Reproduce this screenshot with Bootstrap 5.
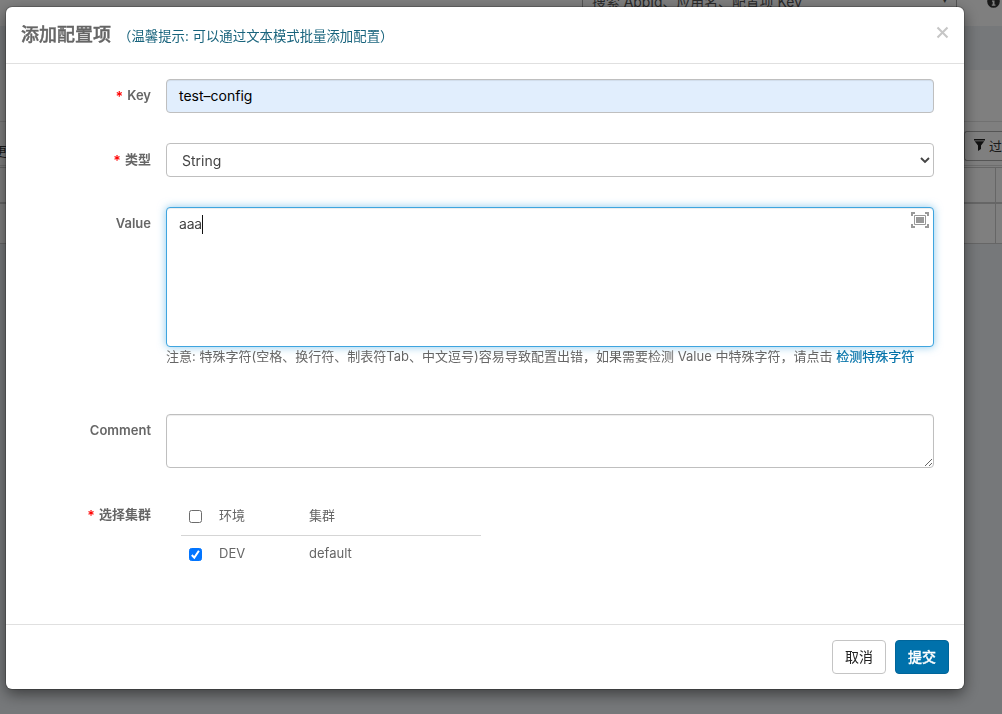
<!DOCTYPE html>
<html lang="zh-CN">
<head>
<meta charset="utf-8">
<meta name="viewport" content="width=device-width, initial-scale=1">
<title>添加配置项</title>
<link rel="stylesheet" href="https://cdn.jsdelivr.net/npm/bootstrap@5.3.0/dist/css/bootstrap.min.css">
<style>
html, body { height: 100%; }
body { font-family: Inter, "Noto Sans CJK SC", sans-serif; font-size: 13px; line-height: 20px; color: #666; background: #edf1f5; overflow: hidden; }
/* page behind the dialog */
.top-bar { height: 26px; background: #fff; padding-right: 2px; gap: 30px; }
.top-search { width: 375px; height: 27px; margin-top: -19px; border: 1px solid #aaa; padding: 0 9px; font-size: 13.9px; line-height: 41px; color: #555; }
.top-search span { font-size: 7px; line-height: 37px; }
.top-info { margin-top: -5px; }
.gap-band { height: 44px; }
.ns-head { height: 52px; border-bottom: 1px solid #e2e2e2; }
.ns-tools { height: 44px; padding-top: 9px; padding-right: 0; border-bottom: 1px solid #ddd; }
.filter-btn { width: 38px; height: 30px; border: 1px solid #aaa; border-right: 0; border-radius: 3px 0 0 3px; color: #333; padding-left: 10px; gap: 4px; white-space: nowrap; overflow: hidden; font-size: 13px; }
.filter-btn svg { margin-top: -2px; margin-left: -1px; }
.ns-left { color: #333; line-height: 40px; margin-left: -6px; }
.ns-grid-head { height: 37px; margin-top: 1px; border-top: 1px solid #ccc; border-bottom: 2px solid #ccc; }
.ns-grid-line { height: 40px; border-bottom: 1px solid #ccc; }
.ns-cell { width: 7px; border-left: 1px solid #ccc; }
/* dialog */
.modal-backdrop { --bs-backdrop-opacity: .5; }
.modal-dialog.cfg-dialog { width: 958px; max-width: none; margin: 7px 0 0 6px; }
.cfg-dialog .modal-content { height: 682px; border: 0; border-radius: 6px; box-shadow: 0 0 0 1px rgba(0,0,0,.2), 0 5px 15px rgba(0,0,0,.5); color: #666; }
.cfg-dialog .modal-header { height: 57px; padding: 0 15px; border-bottom: 1px solid #e0e0e0; }
.cfg-title { font-size: 18px; line-height: 26px; font-weight: 500; -webkit-text-stroke: .4px currentColor; }
.cfg-tip { font-size: 13.4px; color: #19647d; margin-left: 7px; padding-top: 2px; white-space: nowrap; }
.cfg-close { width: 13px; height: 13px; margin-top: -5px; color: #c6c6c6; line-height: 0; }
.cfg-dialog .modal-body { padding: 15px 30px 0 15px; }
.cfg-row { display: flex; margin-bottom: 30px; }
.cfg-label { flex: 0 0 130px; margin-right: 15px; padding-top: 6px; text-align: right; font-weight: 600; font-size: 13px; line-height: 20px; }
.cfg-label i { color: #f00; font-style: normal; font-size: 14px; line-height: 1; margin-right: 1px; vertical-align: -2px; }
.cfg-field { flex: 1 1 auto; min-width: 0; position: relative; }
.form-control, .form-select { height: 34px; border: 1px solid #bfbfbf; border-radius: 4px; font-size: 14px; line-height: 20px; padding: 6px 12px; color: #444; box-shadow: inset 0 1px 1px rgba(0,0,0,.075); }
.cfg-key { background: #e1eefd; color: #000; }
.form-select { padding: 7px 12px 5px 15px; background-image: url("data:image/svg+xml,%3csvg xmlns='http://www.w3.org/2000/svg' viewBox='0 0 10 8'%3e%3cpath d='M1 2l4 4 4-4' fill='none' stroke='%23444' stroke-width='1.9'/%3e%3c/svg%3e"); background-size: 10px 8px; background-position: right 3px center; box-shadow: none; }
.cfg-value { height: 140px; border-color: #3fa5df; box-shadow: inset 0 1px 1px rgba(0,0,0,.075), 0 0 8px rgba(63,165,223,.6); letter-spacing: -.2px; }
.caret { display: inline-block; width: 1px; height: 19px; background: #111; vertical-align: -5px; }
.cfg-full { position: absolute; right: 5px; top: 5px; }
.cfg-note { white-space: nowrap; height: 37px; font-size: 13px; line-height: 18px; letter-spacing: .01px; }
.cfg-note a { color: #0071a8; text-decoration: none; -webkit-text-stroke: .2px currentColor; }
textarea.cfg-comment { height: 54px; resize: none; display: block; }
.cfg-grip { position: absolute; right: 1px; bottom: 1px; }
.cluster-list { width: 300px; margin-left: 15px; }
.cluster-line { display: flex; align-items: center; height: 37px; padding-bottom: 3px; }
.cluster-line + .cluster-line { border-top: 1px solid #d5d5d5; height: 38px; }
.cluster-line .form-check-input { width: 13px; height: 13px; margin: 2px 17px 0 8px; border: 1px solid #6c6c6c; border-radius: 2.5px; flex: none; }
.cluster-line .form-check-input:checked { background-color: #0275ff; border-color: #0275ff; background-size: 13px 13px; background-image: url("data:image/svg+xml,%3csvg xmlns='http://www.w3.org/2000/svg' viewBox='0 0 13 13'%3e%3cpath d='M2.8 7l2.5 2.6 4.6-6.8' fill='none' stroke='%23fff' stroke-width='2'/%3e%3c/svg%3e"); }
.cluster-env { width: 90px; }
.cfg-dialog .modal-footer { height: 65px; padding: 0 15px; border-top: 1px solid #e0e0e0; gap: 9px; }
.cfg-dialog .modal-footer > .btn { margin: 0; width: 54px; height: 34px; padding: 0; font-size: 14px; line-height: 32px; border-radius: 4px; }
.btn-cancel { border: 1px solid #c4c4c4; color: #222; background: #fff; }
.btn-ok { border: 1px solid #00659a; color: #fff; background: #0071ab; font-weight: 500; -webkit-text-stroke: .3px currentColor; }
</style>
</head>
<body>
<div>
  <div class="top-bar d-flex justify-content-end">
    <div class="top-search d-flex justify-content-between">搜索 AppId、应用名、配置项 Key<span>▾</span></div>
    <svg class="top-info" width="13" height="13" viewBox="0 0 13 13"><circle cx="6.5" cy="6.5" r="6.3" fill="#333"/><path d="M5 5.5h2.5V9.5H8.5V10.7H4.8V9.5H5.7V6.7H5zM5.5 2.5h2v1.7h-2z" fill="#fff"/></svg>
  </div>
  <div class="gap-band"></div>
  <div class="bg-white">
    <div class="ns-head"></div>
    <div class="ns-tools d-flex justify-content-between overflow-hidden"><span class="ns-left">更</span>
      <div class="filter-btn d-flex align-items-center"><svg class="flex-shrink-0" width="11" height="12" viewBox="0 0 11 12"><path d="M0 0h11v1.5H0zM.7 2.3h9.6L7 6.4V10L4 12V6.4z" fill="#222"/></svg>过滤配置</div>
    </div>
    <div class="ns-grid-head d-flex justify-content-end"><div class="ns-cell"></div></div>
    <div class="ns-grid-line d-flex justify-content-end"><div class="ns-cell"></div></div>
  </div>
</div>
<div class="modal-backdrop show"></div>
<div class="modal d-block overflow-hidden" tabindex="-1">
  <div class="modal-dialog cfg-dialog">
    <div class="modal-content">
      <div class="modal-header d-flex align-items-center">
        <div class="d-flex align-items-center"><span class="cfg-title">添加配置项</span><span class="cfg-tip">（温馨提示: 可以通过文本模式批量添加配置）</span></div>
        <span class="cfg-close"><svg width="13" height="13" viewBox="0 0 13 13"><path d="M1.5 1.5l10 10M11.5 1.5l-10 10" stroke="currentColor" stroke-width="2.1"/></svg></span>
      </div>
      <div class="modal-body">
        <div class="cfg-row"><label class="cfg-label"><i>*</i> Key</label><div class="cfg-field"><div class="form-control cfg-key">test–config</div></div></div>
        <div class="cfg-row"><label class="cfg-label"><i>*</i> 类型</label><div class="cfg-field"><select class="form-select"><option>String</option></select></div></div>
        <div class="cfg-row"><label class="cfg-label">Value</label>
          <div class="cfg-field">
            <div class="form-control cfg-value">aaa<span class="caret"></span></div>
            <svg class="cfg-full" width="18" height="16" viewBox="0 0 18 16"><path d="M1 4V1h3M14 1h3v3M17 12v3h-3M4 15H1v-3" fill="none" stroke="#999" stroke-width="2"/><path d="M3.5 3.5h11v9h-11z" fill="none" stroke="#999"/><path d="M5 5h8v6H5z" fill="#999"/></svg>
            <div class="cfg-note">注意: 特殊字符(空格、换行符、制表符Tab、中文逗号)容易导致配置出错，如果需要检测 Value 中特殊字符，请点击 <a href="#">检测特殊字符</a></div>
          </div>
        </div>
        <div class="cfg-row"><label class="cfg-label">Comment</label><div class="cfg-field"><textarea class="form-control cfg-comment"></textarea><svg class="cfg-grip" width="9" height="9" viewBox="0 0 9 9"><path d="M1 8l7-7M5 8l3-3" stroke="#555" stroke-width=".9"/></svg></div></div>
        <div class="cfg-row"><label class="cfg-label"><i>*</i> 选择集群</label>
          <div class="cfg-field"><div class="cluster-list">
            <div class="cluster-line"><input class="form-check-input" type="checkbox"><span class="cluster-env">环境</span><span>集群</span></div>
            <div class="cluster-line"><input class="form-check-input" type="checkbox" checked><span class="cluster-env">DEV</span><span>default</span></div>
          </div></div>
        </div>
      </div>
      <div class="modal-footer"><button class="btn btn-cancel">取消</button><button class="btn btn-ok">提交</button></div>
    </div>
  </div>
</div>
<script src="https://cdn.jsdelivr.net/npm/bootstrap@5.3.0/dist/js/bootstrap.bundle.min.js"></script>
</body>
</html>
